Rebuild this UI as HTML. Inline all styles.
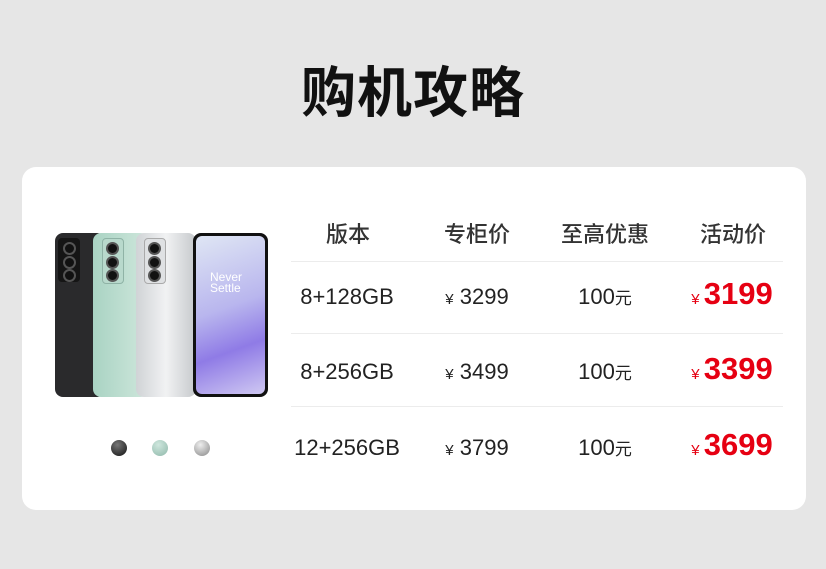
<!DOCTYPE html>
<html><head><meta charset="utf-8"><style>
body{margin:0;width:826px;height:569px;background:#e6e6e6;font-family:"Liberation Sans","Noto Sans CJK SC",sans-serif;position:relative;overflow:hidden}
.t{position:absolute;top:48px;left:0;width:826px;text-align:center;font-size:55px;font-weight:bold;color:#111;font-family:"Noto Sans CJK SC",sans-serif;letter-spacing:1px}
.card{position:absolute;left:22px;top:167px;width:784px;height:343px;background:#fff;border-radius:14px}
.c{position:absolute;width:130px;text-align:center;transform:translateX(-50%);color:#222}
.h{font-size:22px;font-family:"Noto Sans CJK SC",sans-serif;color:#333;font-weight:500}
.r{font-size:22px}
.y{font-size:15px}
.red{color:#e60012;font-weight:bold;font-size:31px}
.ln{position:absolute;left:291px;width:492px;height:1px;background:#ececec}
.ph{position:absolute;top:233px;height:164px;border-radius:8px}
.cam{position:absolute;border-radius:50%;background:#111;border:2px solid #555;width:9px;height:9px}
.dot{position:absolute;width:16px;height:16px;border-radius:50%;top:440px}
</style></head><body>
<div class="t">购机攻略</div>
<div class="card"></div>
<div class="ph" style="left:55px;width:50px;background:#2a2a2c"></div>
<div class="ph" style="left:93px;width:55px;background:linear-gradient(90deg,#a9d3c3,#cfe7dc)"></div>
<div class="ph" style="left:136px;width:60px;background:linear-gradient(90deg,#d0d3d6,#f1f2f3,#c6c9cc)"></div>
<div style="position:absolute;left:58px;top:238px;width:22px;height:44px;background:#151515;border-radius:4px"></div>
<div style="position:absolute;left:102px;top:238px;width:20px;height:44px;background:#b8d9cc;border:1px solid #8fb3a6;border-radius:4px"></div>
<div style="position:absolute;left:144px;top:238px;width:20px;height:44px;background:#dfe1e3;border:1px solid #aaa;border-radius:4px"></div>
<div class="cam" style="left:63px;top:242px"></div><div class="cam" style="left:63px;top:256px"></div><div class="cam" style="left:63px;top:269px"></div>
<div class="cam" style="left:106px;top:242px"></div><div class="cam" style="left:106px;top:256px"></div><div class="cam" style="left:106px;top:269px"></div>
<div class="cam" style="left:148px;top:242px"></div><div class="cam" style="left:148px;top:256px"></div><div class="cam" style="left:148px;top:269px"></div>
<div class="ph" style="left:193px;width:75px;background:#111"></div>
<div style="position:absolute;left:196px;top:236px;width:69px;height:158px;border-radius:6px;background:linear-gradient(160deg,#dfe6f4 0%,#b9b6ee 45%,#8f7be6 70%,#cfc8f2 100%)"></div>
<div style="position:absolute;left:210px;top:272px;color:#fff;font-size:12px;line-height:11px">Never<br>Settle</div>
<div class="dot" style="left:111px;background:radial-gradient(circle at 40% 30%,#777,#111)"></div>
<div class="dot" style="left:152px;background:radial-gradient(circle at 40% 30%,#cfe7de,#8fb8aa)"></div>
<div class="dot" style="left:194px;background:radial-gradient(circle at 40% 30%,#eee,#888)"></div>

<div class="c h" style="left:348px;top:217px">版本</div>
<div class="c h" style="left:477px;top:217px">专柜价</div>
<div class="c h" style="left:605px;top:217px">至高优惠</div>
<div class="c h" style="left:733px;top:217px">活动价</div>
<div class="ln" style="top:261px"></div>
<div class="ln" style="top:333px"></div>
<div class="ln" style="top:406px"></div>

<div class="c r" style="left:347px;top:284px">8+128GB</div>
<div class="c r" style="left:477px;top:284px"><span class="y">¥</span> 3299</div>
<div class="c r" style="left:605px;top:284px">100<span style="font-size:17px">元</span></div>
<div class="c" style="left:732px;top:276px;color:#e60012"><span class="y">¥ </span><span class="red">3199</span></div>

<div class="c r" style="left:347px;top:359px">8+256GB</div>
<div class="c r" style="left:477px;top:359px"><span class="y">¥</span> 3499</div>
<div class="c r" style="left:605px;top:359px">100<span style="font-size:17px">元</span></div>
<div class="c" style="left:732px;top:351px;color:#e60012"><span class="y">¥ </span><span class="red">3399</span></div>

<div class="c r" style="left:347px;top:435px">12+256GB</div>
<div class="c r" style="left:477px;top:435px"><span class="y">¥</span> 3799</div>
<div class="c r" style="left:605px;top:435px">100<span style="font-size:17px">元</span></div>
<div class="c" style="left:732px;top:427px;color:#e60012"><span class="y">¥ </span><span class="red">3699</span></div>
</body></html>
